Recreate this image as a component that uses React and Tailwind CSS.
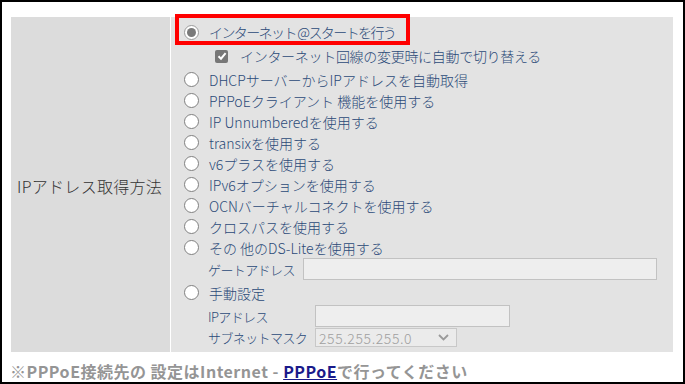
import React from "react";

const font = { fontFamily: '"Noto Sans CJK JP", "Noto Sans", sans-serif' };

function Radio({ checked }) {
  return (
    <span
      className={
        "relative inline-flex h-[15px] w-[15px] shrink-0 items-center justify-center rounded-full border bg-white " +
        (checked ? "border-[#9a9a9a]" : "border-[#808080]")
      }
    >
      {checked && <span className="h-[9px] w-[9px] rounded-full bg-[#7a7a7a]" />}
    </span>
  );
}

function RadioRow({ label, checked, h = "h-[21px]", extra = "" }) {
  return (
    <div className={"flex items-center pl-[13px] " + h}>
      <Radio checked={checked} />
      <span className={"ml-[10px] whitespace-nowrap text-[14px] font-light leading-none text-[#2b4a78] " + extra}>
        {label}
      </span>
    </div>
  );
}

export default function App() {
  const rows = [
    "DHCPサーバーからIPアドレスを自動取得",
    "PPPoEクライアント 機能を使用する",
    "IP Unnumberedを使用する",
    "transixを使用する",
    "v6プラスを使用する",
    "IPv6オプションを使用する",
    "OCNバーチャルコネクトを使用する",
    "クロスパスを使用する",
    "その 他のDS-Liteを使用する",
  ];
  return (
    <div className="relative h-[384px] w-[685px] border-2 border-black bg-white" style={font}>
      <div className="ml-[9px] mt-[15px] flex w-[662px]">
        <div className="flex w-[159px] items-center bg-[#dcdcdc] pl-[6px] pt-[2px]">
          <span className="whitespace-nowrap text-[16px] font-light tracking-[0.3px] text-[#333333]">IPアドレス取得方法</span>
        </div>
        <div className="w-px bg-white" />
        <div className="flex w-[502px] flex-col bg-[#e3e3e3] pb-[5px] pt-[4px]">
          <RadioRow label="インターネット @スタートを行う" checked h="h-[22px]" extra="tracking-[-1.6px]" />
          <div className="flex h-[26px] items-center pl-[44px]">
            <span className="flex h-[13px] w-[13px] items-center justify-center rounded-[2px] bg-[#777777]">
              <svg width="10" height="10" viewBox="0 0 10 10">
                <path d="M1.5 5.2 L4 7.7 L8.6 2.2" stroke="white" strokeWidth="2" fill="none" />
              </svg>
            </span>
            <span className="ml-[12px] whitespace-nowrap text-[14px] font-light leading-none tracking-[-0.3px] text-[#2b4a78]">
              インターネット回線の変更時に自動で切り替える
            </span>
          </div>
          {rows.map((r) => (
            <RadioRow key={r} label={r} />
          ))}
          <div className="flex h-[22px] items-center pl-[37px] pr-[16px]">
            <span className="w-[95px] whitespace-nowrap text-[13px] font-light leading-none tracking-[-0.6px] text-[#2b4a78]">ゲートアドレス</span>
            <div className="h-full flex-1 border border-[#c2c2c2] bg-[#eeeeee]" />
          </div>
          <RadioRow label="手動設定" h="h-[25px]" />
          <div className="flex h-[22px] items-center pl-[37px]">
            <span className="w-[107px] whitespace-nowrap text-[13px] font-light leading-none tracking-[-0.6px] text-[#2b4a78]">IPアドレス</span>
            <div className="h-full w-[195px] border border-[#c2c2c2] bg-[#eeeeee]" />
          </div>
          <div className="mt-[1px] flex h-[19px] items-center pl-[37px]">
            <span className="w-[107px] whitespace-nowrap text-[13px] font-light leading-none tracking-[-0.6px] text-[#2b4a78]">サブネットマスク</span>
            <div className="flex h-full w-[142px] items-center justify-between border border-[#c8c8c8] bg-[#ebebeb] pl-[3px] pr-[7px]">
              <span className="text-[14px] font-light leading-none tracking-[0.6px] text-[#a0a0a0]">255.255.255.0</span>
              <svg width="11" height="7" viewBox="0 0 11 7">
                <path d="M1 1 L5.5 5.5 L10 1" stroke="#9a9a9a" strokeWidth="1.8" fill="none" />
              </svg>
            </div>
          </div>
        </div>
      </div>
      <div className="ml-[8px] mt-[9px] whitespace-nowrap text-[16px] font-bold leading-[20px] tracking-[0.5px] text-[#959595]">
        ※PPPoE接続先の 設定はInternet - <span className="text-[#1a1a8a] underline">PPPoE</span>で行ってください
      </div>
      <div className="absolute left-[173px] top-[12px] h-[31px] w-[235px] border-4 border-[#ff0000]" />
    </div>
  );
}
